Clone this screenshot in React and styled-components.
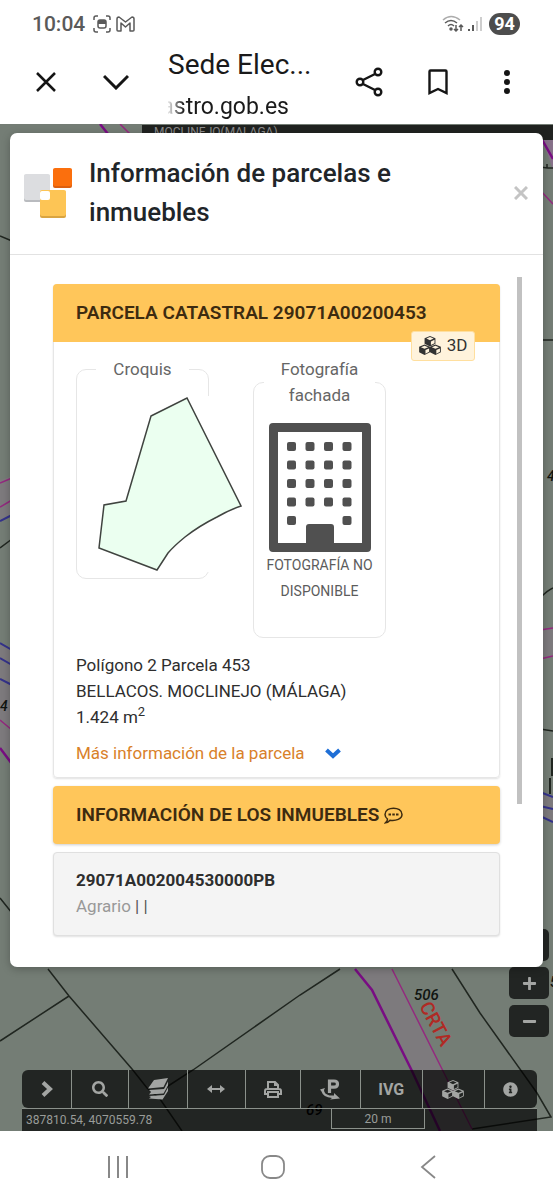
import * as React from 'react';
import styled, { createGlobalStyle, css } from 'styled-components';
import { FaInfoCircle, FaMinus, FaPlus, FaSearch } from 'react-icons/fa';


const color = {
  primary: '#ffc65a',
  primaryText: '#3d2b10',
  link: '#d9812a',
  text: '#2e2e2e',
  muted: '#666666',
  border: '#e6e6e6',
  map: '#747d75',
  control: 'rgba(0, 0, 0, 0.7)',
  controlText: '#a3a5a3',
};

const GlobalStyle = createGlobalStyle`
  *, *::before, *::after {
    box-sizing: border-box;
  }

  body {
    margin: 0;
    font-family: Roboto, "Liberation Sans", sans-serif;
    font-size: 17px;
    line-height: 26px;
    color: ${color.text};
    background: #ffffff;
  }
`;

const Screen = styled.div`
  min-height: 100vh;
  display: flex;
  flex-direction: column;
`;

const StatusBar = styled.div`
  display: flex;
  align-items: center;
  height: 48px;
  padding: 0 33px 0 32px;
  color: #5a5a5a;
`;

const Clock = styled.time`
  font-size: 21px;
  font-weight: 500;
  margin-right: 8px;
`;

const StatusIcons = styled.div`
  display: flex;
  align-items: center;
  gap: 5px;
`;

const Signals = styled(StatusIcons)`
  gap: 4px;
  margin-left: auto;
`;

const Battery = styled.span`
  width: 31px;
  height: 22px;
  margin-left: 3px;
  border-radius: 11px;
  font-size: 18px;
  font-weight: 700;
  line-height: 22px;
  text-align: center;
  color: #ffffff;
  background: #4d4d4d;
`;

const BrowserBar = styled.header`
  display: flex;
  align-items: center;
  height: 76px;
  padding: 0 30px 8px;
`;

const IconButton = styled.button`
  display: flex;
  align-items: center;
  justify-content: center;
  flex-shrink: 0;
  width: 32px;
  height: 32px;
  padding: 0;
  border: 0;
  color: #151515;
  background: none;
  cursor: pointer;
`;

const BrowserActions = styled.div`
  display: flex;
  gap: ${props => props.$gap}px;
`;

const Address = styled.div`
  flex: 1;
  min-width: 0;
  margin-left: 36px;
  padding-top: 7px;
  color: #1a1a1a;
`;

const PageTitle = styled.div`
  font-size: 28px;
  line-height: 42px;
  white-space: nowrap;
`;

const PageUrl = styled.div`
  display: flex;
  justify-content: flex-end;
  width: 121px;
  overflow: hidden;
  font-size: 23px;
  line-height: 42px;
  mask-image: linear-gradient(to right, rgba(0, 0, 0, 0.1), #000000 16px);
`;

const MapView = styled.main`
  position: relative;
  flex: 1;
  display: flex;
  flex-direction: column;
  padding: 9px 10px 0;
  overflow: hidden;
  background: ${color.map};
`;

const MapDrawing = styled.svg`
  position: absolute;
  inset: 0;
  width: 100%;
  height: 100%;
`;

const PlaceBar = styled.div`
  position: absolute;
  top: 1px;
  right: 0;
  left: 142px;
  height: 15px;
  padding-left: 12px;
  font-size: 12px;
  line-height: 14px;
  color: #8c8c8c;
  background: #202220;
`;

const Dialog = styled.section`
  position: relative;
  z-index: 2;
  border-radius: 7px;
  background: #ffffff;
  box-shadow: 0 2px 8px rgba(0, 0, 0, 0.25);
`;

const DialogHeader = styled.header`
  display: flex;
  align-items: center;
  height: 122px;
  padding: 0 14px 2px;
  border-bottom: 1px solid #e2e2e2;
`;

const DialogTitle = styled.h1`
  flex: 1;
  margin: 0 0 0 17px;
  font-size: 26px;
  font-weight: 500;
  line-height: 39px;
  color: #212529;
`;

const CloseButton = styled(IconButton)`
  width: 16px;
  color: #c4c4c4;
`;

const DialogBody = styled.div`
  display: flex;
  gap: 17px;
  padding: 22px 21px 31px 43px;
`;

const Content = styled.div`
  flex: 1;
  min-width: 0;
  display: flex;
  flex-direction: column;
  gap: 8px;
  padding-top: 7px;
`;

const ScrollThumb = styled.div`
  flex: 0 0 5px;
  height: 527px;
  background: #c1c1c1;
`;

const Card = styled.article`
  border: 1px solid ${color.border};
  border-radius: 4px;
  box-shadow: 0 1px 2px rgba(0, 0, 0, 0.12);

  ${props => props.$isShaded && css`
    padding: 14px 22px 16px;
    background: #f4f4f4;
    border-color: #e0e0e0;
  `}
`;

const Banner = styled.h2`
  display: flex;
  align-items: center;
  gap: 5px;
  height: 58px;
  margin: 0;
  padding: 0 23px;
  border-radius: 4px;
  font-size: 19px;
  font-weight: 600;
  color: ${color.primaryText};
  background: ${color.primary};

  ${props => props.$isCardTop ? css`
    margin: -1px -1px 0;
    border-radius: 4px 4px 0 0;
  ` : css`
    box-shadow: 0 1px 3px rgba(0, 0, 0, 0.2);
  `}
`;

const CardBody = styled.div`
  position: relative;
  padding: 14px 22px 11px;
`;

const ThreeDButton = styled.button`
  position: absolute;
  top: -11px;
  right: 24px;
  display: flex;
  align-items: center;
  justify-content: center;
  gap: 6px;
  width: 64px;
  height: 30px;
  padding: 0 0 2px;
  border: 1px solid #ffdf9e;
  border-radius: 3px;
  font-family: inherit;
  font-size: 17px;
  color: #333333;
  background: #fff3dc;
  cursor: pointer;
`;

const Previews = styled.div`
  display: flex;
  align-items: flex-start;
  gap: 44px;
  margin-bottom: 14px;
`;

const Preview = styled.fieldset`
  flex: 0 0 133px;
  min-width: 0;
  margin: 0;
  padding: ${props => props.$padding};
  border: 1px solid ${color.border};
  border-radius: 10px;
  font-size: 14px;
  text-align: center;
  color: #5c5c5c;

  svg {
    display: block;
  }
`;

const Legend = styled.legend`
  margin: 0 auto;
  padding: 0 17px;
  font-size: 17px;
  color: ${color.muted};
`;

const Sketch = styled.svg`
  margin-left: 21px;
  background: #ffffff;
`;

const BuildingFrame = styled.div`
  display: flex;
  justify-content: center;
`;

const Facts = styled.p`
  margin: 0;

  sup {
    font-size: 13px;
    line-height: 0;
  }
`;

const MoreLink = styled.a`
  display: flex;
  align-items: center;
  gap: 20px;
  margin-top: 10px;
  text-decoration: none;
  color: ${color.link};

  svg {
    color: #1f6fd6;
  }
`;

const Reference = styled.h3`
  margin: 0;
  font-size: 17px;
  font-weight: 700;
`;

const Usage = styled.p`
  margin: 0;
  color: #555555;

  span {
    color: #999999;
  }
`;

const ZoomControls = styled.div`
  position: absolute;
  right: 4px;
  bottom: 94px;
  display: flex;
  flex-direction: column;
  gap: 6px;
`;

const MapButton = styled.button`
  display: flex;
  align-items: center;
  justify-content: center;
  padding: 0;
  border: 0;
  font-family: inherit;
  font-size: 16px;
  font-weight: 700;
  color: ${color.controlText};
  background: ${color.control};
  cursor: pointer;
`;

const ZoomButton = styled(MapButton)`
  width: 40px;
  height: 32px;
  border-radius: 5px;
`;

const MapFooter = styled.footer`
  position: relative;
  margin: auto 6px 0 12px;
`;

const Toolbar = styled.nav`
  display: flex;
  height: 38px;
`;

const Tool = styled(MapButton)`
  flex: ${props => props.$size} 1 0;
  border-right: 1px solid #8b918b;

  &:first-child {
    border-radius: 6px 0 0 6px;
  }

  &:last-child {
    border-right: 0;
    border-radius: 0 6px 6px 0;
  }
`;

const Readout = styled.div`
  display: flex;
  height: 23px;
  padding-left: 4px;
  border-top: 1px solid #8b918b;
  font-size: 12px;
  line-height: 23px;
  color: #999c99;
  background: ${color.control};
`;

const Coordinates = styled.span`
  flex: 1;
`;

const Scale = styled.span`
  width: 94px;
  height: 20px;
  margin-right: 112px;
  border: 1px solid #8b918b;
  border-top: 0;
  line-height: 20px;
  text-align: center;
`;

const SystemNav = styled.nav`
  display: flex;
  align-items: center;
  justify-content: center;
  gap: 123px;
  height: 69px;
  padding: 3px 7px 0 0;
  background: #ffffff;

  button {
    color: #888888;
  }
`;


const Line = props => <svg fill={ 'none' } stroke={ 'currentColor' } { ...props }/>;

const windows = [0, 1, 2, 3, 4].flatMap(row =>
  [0, 1, 2, 3]
    .filter(column => row < 4 || column === 0 || column === 3)
    .map(column => ({ x: 18 + column * 18.5, y: 19 + row * 18.5 }))
);

const Building = () => (
  <svg width={ 102 } height={ 129 } viewBox={ '0 0 102 129' } fill={ '#505050' }>
    <path fillRule={ 'evenodd' } d={ 'M4 0H98Q102 0 102 4V125Q102 129 98 129H4Q0 129 0 125V4Q0 0 4 0ZM9 9V120H37V104Q37 101 40 101H62Q65 101 65 104V120H93V9Z' }/>
    { windows.map(({ x, y }) => <rect key={ `${ x }-${ y }` } x={ x } y={ y } width={ 9 } height={ 9 } rx={ 2 }/>) }
  </svg>
);

const Logo = () => (
  <svg width={ 48 } height={ 52 } viewBox={ '0 0 48 52' }>
    <rect x={ 0 } y={ 8 } width={ 26 } height={ 27 } rx={ 2 } fill={ '#b9bbbf' }/>
    <rect x={ 0 } y={ 7 } width={ 26 } height={ 26 } rx={ 2 } fill={ '#dcdde0' }/>
    <rect x={ 29 } y={ 2 } width={ 19 } height={ 19 } rx={ 2 } fill={ '#dc5f10' }/>
    <rect x={ 29 } y={ 1 } width={ 19 } height={ 18 } rx={ 2 } fill={ '#fb6f0d' }/>
    <rect x={ 16 } y={ 24 } width={ 26 } height={ 27 } rx={ 2 } fill={ '#d9a441' }/>
    <rect x={ 16 } y={ 23 } width={ 26 } height={ 26 } rx={ 2 } fill={ '#fdc555' }/>
    <rect x={ 16 } y={ 24 } width={ 10 } height={ 9 } rx={ 2 } fill={ '#ffffff' }/>
  </svg>
);

const cube = 'M6 0L12 2.5V8.5L6 11.5L0 8.5V2.5ZM6 1.2L2 2.9L6 4.7L10 2.9ZM7 6V10L11 8V4.2Z';

const CubesIcon = () => (
  <svg width={ 22 } height={ 19 } viewBox={ '0 0 24 21' } fill={ 'currentColor' } fillRule={ 'evenodd' }>
    <path d={ cube } transform={ 'translate(6 0)' }/>
    <path d={ cube } transform={ 'translate(0 9.5)' }/>
    <path d={ cube } transform={ 'translate(12 9.5)' }/>
  </svg>
);

const ChevronDownIcon = () => (
  <Line width={ 16 } height={ 11 } viewBox={ '0 0 16 11' } strokeWidth={ 4 }><path d={ 'M1.5 2L8 8L14.5 2' }/></Line>
);

const ChevronRightIcon = () => (
  <Line width={ 12 } height={ 16 } viewBox={ '0 0 12 16' } strokeWidth={ 4 }><path d={ 'M2 1.5L9 8L2 14.5' }/></Line>
);

const CommentIcon = () => (
  <Line width={ 19 } height={ 17 } viewBox={ '0 0 19 17' } strokeWidth={ 1.5 }>
    <path d={ 'M6 13.2Q4 15.6 1.5 15.8Q3.5 14 3.5 12Q1 10 1 7.5C1 -1 18 -1 18 7.5C18 12 12 14 6 13.2Z' }/>
    <path d={ 'M4.5 7.5H7M8.3 7.5H10.8M12 7.5H14.5' } strokeWidth={ 2.2 }/>
  </Line>
);

const LayersIcon = () => (
  <svg width={ 21 } height={ 22 } viewBox={ '0 0 21 22' } fill={ 'currentColor' }>
    <path d={ 'M6 2L20 0L15.500 9L0 10.500Z' }/>
    <path d={ 'M1 12L16 11L20 3.500V7.500L15.500 15.500L1 16.500L3 14Z' }/>
    <path d={ 'M1 18L16 17L20 9.500V13L14.500 21.500L1 20.500L3 19Z' }/>
  </svg>
);

const WidthIcon = () => (
  <Line width={ 18 } height={ 8 } viewBox={ '0 0 18 8' } strokeWidth={ 2 }>
    <path d={ 'M2 4H16' }/>
    <path d={ 'M5 0L0 4L5 8ZM13 0L18 4L13 8Z' } fill={ 'currentColor' } stroke={ 'none' }/>
  </Line>
);

const PrintIcon = () => (
  <Line width={ 18 } height={ 17 } viewBox={ '0 0 18 17' } strokeWidth={ 2 }>
    <path d={ 'M4 8V1H11L14 4V8M11 1V4H14M4 13H1V10Q1 8 3 8H15Q17 8 17 10V13H14M4 11H14V16H4Z' }/>
  </Line>
);

const ParcelIcon = () => (
  <Line width={ 21 } height={ 21 } viewBox={ '0 0 21 21' } strokeWidth={ 3.2 }>
    <path d={ 'M9.500 14V2H14Q17.500 2 17.500 5Q17.500 8.200 14 8.200H9.500' }/>
    <path d={ 'M0 10.500L5 9L4 11Q4 15 9.500 16.500H14L14 14L20 19.500L10 20.500L12 19Q3 18 1.500 12.500Z' } fill={ 'currentColor' } stroke={ 'none' }/>
  </Line>
);

const tools = [
  { name: 'Desplegar', size: 50, icon: <ChevronRightIcon/> },
  { name: 'Buscar', size: 57, icon: <FaSearch size={ 16 }/> },
  { name: 'Capas', size: 59, icon: <LayersIcon/> },
  { name: 'Medir', size: 57, icon: <WidthIcon/> },
  { name: 'Imprimir', size: 55, icon: <PrintIcon/> },
  { name: 'Parcela', size: 60, icon: <ParcelIcon/> },
  { name: 'IVG', size: 62, icon: 'IVG' },
  { name: '3D', size: 62, icon: <CubesIcon/> },
  { name: 'Información', size: 53, icon: <FaInfoCircle size={ 15 }/> },
];

const CadastralMap = () => (
  <MapDrawing viewBox={ '0 0 553 1007' } preserveAspectRatio={ 'xMidYMax slice' } fill={ 'none' } stroke={ '#202620' } strokeWidth={ 1.5 }>
    {/* roads */}
    <g fill={ '#7d7a7d' } stroke={ 'none' }>
      <path d={ 'M355 845L372 866L412 947L440 1007H474L442 945L415 891L392 845Z' }/>
      <path d={ 'M0 356L12 352V390L0 396ZM0 520L12 526V638L0 622ZM540 505H553V533H540ZM540 668L553 672V698L540 692Z' }/>
      <path d={ 'M540 8H553V46Z' } fill={ '#87718a' }/>
    </g>

    {/* parcel limits */}
    <path d={ 'M0 112L12 117M0 424L12 415M0 774L12 789M48 845L69 872L132 945L147 964L160 975L182 1007M0 917L69 872' }/>
    <path d={ 'M340 845L300 871L193 946L165 964M452 845L480 889L537 969L551 993L472 1005' }/>
    <path d={ 'M540 43L547 44V40M547 44H553M540 216H553M540 474Q548 466 553 464M540 605L553 607' }/>
    <path d={ 'M552 634V652M550 654V670' } strokeWidth={ 2 }/>

    <g stroke={ '#790d83' } strokeWidth={ 2.5 }>
      <path d={ 'M355 845L372 866L412 947L440 1007M100 0L108 10M0 624L12 640M540 12L553 35' }/>
    </g>
    <g stroke={ '#94297f' }>
      <path d={ 'M392 845L415 891L442 945L472 1005M120 0L130 10M0 359L12 354M0 383L12 376M0 596L12 606' }/>
      <path d={ 'M540 66L553 80M540 506L553 504M540 535L553 532' }/>
    </g>
    <g stroke={ '#34328b' } strokeWidth={ 2 }>
      <path d={ 'M0 397L12 391M0 519L12 526M0 534L12 541M0 555L12 561M540 668L553 673M540 682L553 685M540 692L553 698' }/>
    </g>

    <g fill={ '#101410' } stroke={ 'none' } fontFamily={ 'Roboto, sans-serif' } fontSize={ 14 } fontStyle={ 'italic' } fontWeight={ 500 }>
      <text x={ 414 } y={ 876 } fontSize={ 15 }>506</text>
      <text x={ 306 } y={ 991 } fontSize={ 15 } fill={ '#000000' }>69</text>
      <text x={ 0 } y={ 587 }>4</text>
      <text x={ 547 } y={ 357 }>4</text>
      <text x={ 550 } y={ 863 }>5</text>
      <text transform={ 'translate(419 882) rotate(62)' } fill={ '#b02a24' } fontSize={ 19 } fontStyle={ 'normal' }>CRTA</text>
    </g>
  </MapDrawing>
);

const ParcelCard = () => (
  <Card>
    <Banner $isCardTop={ true }>PARCELA CATASTRAL 29071A00200453</Banner>
    <CardBody>
      <ThreeDButton><CubesIcon/>3D</ThreeDButton>
      <Previews>
        <Preview $padding={ '14px 0 6px' }>
          <Legend>Croquis</Legend>
          <Sketch width={ 144 } height={ 176 } viewBox={ '0 0 144 176' }>
            <path d={ 'M53 20L89 2L143 110Q131 114 119 121Q101 130 87 141Q76 150 70 157L59 174L1 152L6 109L28 105Z' } fill={ '#ebfff0' } stroke={ '#404440' } strokeWidth={ 1.5 }/>
          </Sketch>
        </Preview>
        <Preview $padding={ '15px 0 33px' }>
          <Legend>Fotografía<br/>fachada</Legend>
          <BuildingFrame>
            <Building/>
          </BuildingFrame>
          FOTOGRAFÍA NO<br/>DISPONIBLE
        </Preview>
      </Previews>
      <Facts>
        Polígono 2 Parcela 453<br/>
        BELLACOS. MOCLINEJO (MÁLAGA)<br/>
        1.424 m<sup>2</sup>
      </Facts>
      <MoreLink href={ '#parcela' }>Más información de la parcela<ChevronDownIcon/></MoreLink>
    </CardBody>
  </Card>
);


export default class App extends React.PureComponent {

  render = () => {
    return (
      <Screen>
        <GlobalStyle/>

        <StatusBar>
          <Clock>10:04</Clock>
          <StatusIcons>
            <Line width={ 18 } height={ 18 } viewBox={ '0 0 18 18' } strokeWidth={ 1.5 }>
              <path d={ 'M1 5V3Q1 1 3 1H5M13 1H15Q17 1 17 3V5M17 13V15Q17 17 15 17H13M5 17H3Q1 17 1 15V13' }/>
              <rect x={ 5 } y={ 5 } width={ 8 } height={ 8 } rx={ 2 }/>
              <path d={ 'M5 7H13' } strokeWidth={ 4 }/>
            </Line>
            <Line width={ 19 } height={ 16 } viewBox={ '0 0 19 16' } strokeWidth={ 1.5 } strokeLinejoin={ 'round' }>
              <path d={ 'M1 3Q1 1 3 1L9.5 6L16 1Q18 1 18 3V14Q18 15 17 15H14V7L9.5 11L5 7V15H2Q1 15 1 14Z' }/>
            </Line>
          </StatusIcons>
          <Signals>
            <Line width={ 22 } height={ 18 } viewBox={ '0 0 22 18' } strokeWidth={ 1.5 }>
              <path d={ 'M1 5Q9 -2 18 5' } opacity={ 0.5 }/>
              <path d={ 'M3 8Q9 3 15 8M6 11Q9 8 12 11M14 10V16M12 14L14 16L16 14M19 16V10M17 12L19 10L21 12' }/>
              <circle cx={ 9 } cy={ 14 } r={ 1 } fill={ 'currentColor' }/>
            </Line>
            <Line width={ 14 } height={ 16 } viewBox={ '0 0 14 16' } strokeWidth={ 1.5 }>
              <path d={ 'M1 13V15M5 9V15' } strokeWidth={ 2 }/>
              <path d={ 'M9 5V15M13 1V15' } opacity={ 0.4 }/>
            </Line>
            <Battery>94</Battery>
          </Signals>
        </StatusBar>

        <BrowserBar>
          <BrowserActions $gap={ 38 }>
            <IconButton aria-label={ 'Cerrar pestaña' }>
              <Line width={ 20 } height={ 20 } viewBox={ '0 0 20 20' } strokeWidth={ 2.5 }><path d={ 'M1 1L19 19M19 1L1 19' }/></Line>
            </IconButton>
            <IconButton aria-label={ 'Minimizar' }>
              <Line width={ 26 } height={ 16 } viewBox={ '0 0 26 16' } strokeWidth={ 3 }><path d={ 'M1 2L13 14L25 2' }/></Line>
            </IconButton>
          </BrowserActions>
          <Address>
            <PageTitle>Sede Elec...</PageTitle>
            <PageUrl>astro.gob.es</PageUrl>
          </Address>
          <BrowserActions $gap={ 37 }>
            <IconButton aria-label={ 'Compartir' }>
              <Line width={ 28 } height={ 30 } viewBox={ '0 0 28 30' } strokeWidth={ 2.4 }>
                <circle cx={ 5 } cy={ 15 } r={ 3.3 }/>
                <circle cx={ 23 } cy={ 5 } r={ 3.3 }/>
                <circle cx={ 23 } cy={ 25 } r={ 3.3 }/>
                <path d={ 'M8 13L20 7M8 17L20 23' }/>
              </Line>
            </IconButton>
            <IconButton aria-label={ 'Guardar' }>
              <Line width={ 20 } height={ 26 } viewBox={ '0 0 20 26' } strokeWidth={ 2.4 }><path d={ 'M1.5 2.5Q1.5 1.5 2.5 1.5H17.5Q18.5 1.5 18.5 2.5V24L10 20L1.5 24Z' }/></Line>
            </IconButton>
            <IconButton aria-label={ 'Más opciones' }>
              <svg width={ 8 } height={ 26 } viewBox={ '0 0 8 26' } fill={ 'currentColor' }>
                <circle cx={ 4 } cy={ 4 } r={ 3 }/>
                <circle cx={ 4 } cy={ 13 } r={ 3 }/>
                <circle cx={ 4 } cy={ 22 } r={ 3 }/>
              </svg>
            </IconButton>
          </BrowserActions>
        </BrowserBar>

        <MapView>
          <CadastralMap/>
          <PlaceBar>MOCLINEJO(MALAGA)</PlaceBar>

          <Dialog>
            <DialogHeader>
              <Logo/>
              <DialogTitle>Información de parcelas e inmuebles</DialogTitle>
              <CloseButton aria-label={ 'Cerrar' }>
                <Line width={ 14 } height={ 14 } viewBox={ '0 0 14 14' } strokeWidth={ 3 }><path d={ 'M1 1L13 13M13 1L1 13' }/></Line>
              </CloseButton>
            </DialogHeader>
            <DialogBody>
              <Content>
                <ParcelCard/>
                <Banner>INFORMACIÓN DE LOS INMUEBLES <CommentIcon/></Banner>
                <Card $isShaded={ true }>
                  <Reference>29071A002004530000PB</Reference>
                  <Usage><span>Agrario</span> | |</Usage>
                </Card>
              </Content>
              <ScrollThumb/>
            </DialogBody>
          </Dialog>

          <ZoomControls>
            <ZoomButton aria-label={ 'Centrar' }/>
            <ZoomButton aria-label={ 'Acercar' }><FaPlus size={ 15 }/></ZoomButton>
            <ZoomButton aria-label={ 'Alejar' }><FaMinus size={ 15 }/></ZoomButton>
          </ZoomControls>

          <MapFooter>
            <Toolbar>
              { tools.map(({ name, size, icon }) => <Tool key={ name } aria-label={ name } $size={ size }>{ icon }</Tool>) }
            </Toolbar>
            <Readout>
              <Coordinates>387810.54, 4070559.78</Coordinates>
              <Scale>20 m</Scale>
            </Readout>
          </MapFooter>
        </MapView>

        <SystemNav>
          <IconButton aria-label={ 'Recientes' }>
            <Line width={ 22 } height={ 22 } viewBox={ '0 0 22 22' } strokeWidth={ 2 }><path d={ 'M2 0V22M11 0V22M20 0V22' }/></Line>
          </IconButton>
          <IconButton aria-label={ 'Inicio' }>
            <Line width={ 24 } height={ 24 } viewBox={ '0 0 24 24' } strokeWidth={ 1.8 }><rect x={ 1 } y={ 1 } width={ 22 } height={ 22 } rx={ 8 }/></Line>
          </IconButton>
          <IconButton aria-label={ 'Atrás' }>
            <Line width={ 16 } height={ 24 } viewBox={ '0 0 16 24' } strokeWidth={ 1.8 }><path d={ 'M15 1L2 12L15 23' }/></Line>
          </IconButton>
        </SystemNav>
      </Screen>
    );
  };
};
